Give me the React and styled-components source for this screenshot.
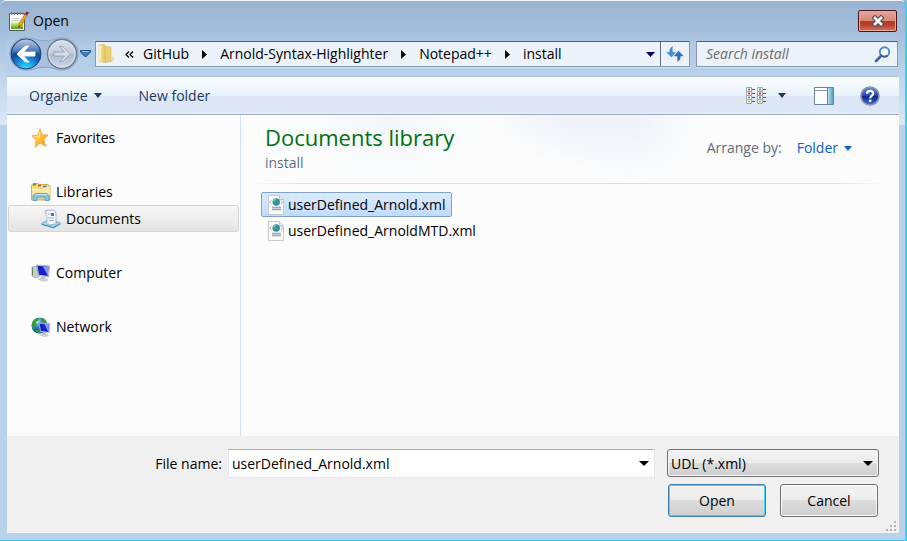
import React from "react";
import styled, { createGlobalStyle, css } from "styled-components";

const GlobalStyle = createGlobalStyle`
  *, *::before, *::after { box-sizing: border-box; }
  body {
    margin: 0;
    background: #9ab5d2;
    color: #000;
    font: 14px/20px "Open Sans", "Noto Sans", sans-serif;
  }
  button, input, select { font: inherit; color: inherit; margin: 0; }
  svg { display: block; flex: none; }
`;

const Window = styled.div`
  display: flex;
  flex-direction: column;
  min-height: 100vh;
  padding: 0 6px 7px 7px;
  border-top: 1px solid #f2f6fa;
  border-right: 2px solid #2fd3ea;
  border-bottom: 1px solid #2bd0e6;
  border-radius: 6px 6px 0 0;
  background:
    linear-gradient(#98b4d1 0, #a4bedb 30px, #b2cbe6 48px, #b9d1ea 76px, transparent 76px) center top / calc(100% - 14px) 100% no-repeat,
    linear-gradient(#98b4d1 0, #a4bedb 30px, #b9d1ea 66px, #dce8f5 124px, #b9d1ea 124px);
`;

const TitleBar = styled.header`
  display: flex;
  align-items: center;
  height: 39px;
  padding: 1px 2px 0;
  gap: 4px;
`;

const Title = styled.h1`
  flex: 1;
  margin: 0;
  font-size: 14px;
  font-weight: 400;
  line-height: 20px;
`;

const CloseButton = styled.button`
  display: flex;
  align-items: center;
  justify-content: center;
  width: 39px;
  height: 22px;
  padding: 0;
  border: 1px solid #4b1420;
  border-radius: 2px;
  box-shadow: inset 0 0 0 1px #e9a79a;
  background: linear-gradient(#e5a598 0, #d98678 10px, #b5391f 10px, #b8412a 14px, #cf7563 100%);
`;

const NavBar = styled.nav`
  display: flex;
  align-items: center;
  height: 36px;
  padding: 0 1px 8px 2px;
`;

const HistoryButtons = styled.div`
  position: relative;
  display: flex;
  align-items: center;
  width: 86px;
  height: 34px;
  flex: none;
`;

const HistoryButton = styled.button`
  display: flex;
  align-items: center;
  justify-content: center;
  width: ${(p) => p.$width}px;
  height: 34px;
  padding: 0;
  border: 0;
  background: none;
  z-index: 1;
`;

const Groove = styled.svg`
  position: absolute;
  inset: 0;
`;

const fieldFrame = css`
  border: 1px solid #8c99a8;
  border-top-color: #54616f;
  box-shadow: 0 1px 0 #d5e3f1;
  background: #ebf2fa;
`;

const AddressBar = styled.div`
  ${fieldFrame}
  display: flex;
  align-items: center;
  flex: 1;
  min-width: 0;
  height: 26px;
  padding-left: 1px;
`;

const Crumb = styled.button`
  padding: 0;
  border: 0;
  background: none;
  white-space: nowrap;
`;

const CrumbArrow = styled.span`
  display: flex;
  justify-content: center;
  width: 31px;
  flex: none;
`;

const Chevrons = styled.span`
  display: flex;
  justify-content: center;
  width: 27px;
  flex: none;
`;

const Spacer = styled.span`
  flex: 1;
`;

const AddressButton = styled.button`
  display: flex;
  align-items: center;
  justify-content: center;
  width: ${(p) => (p.$divided ? 29 : 20)}px;
  height: 24px;
  padding: 0;
  border: 0;
  border-left: ${(p) => (p.$divided ? "1px solid #5f6c7a" : "0")};
  background: none;
  flex: none;
`;

const SearchBox = styled.label`
  ${fieldFrame}
  display: flex;
  align-items: center;
  width: 202px;
  height: 26px;
  margin-left: 6px;
  padding: 0 6px 0 9px;
  flex: none;
`;

const SearchInput = styled.input`
  flex: 1;
  min-width: 0;
  padding: 0;
  border: 0;
  outline: 0;
  background: none;
  &::placeholder { color: #6d6d6d; font-style: italic; opacity: 1; }
`;

const Toolbar = styled.div`
  display: flex;
  align-items: center;
  height: 39px;
  padding: 0 19px 0 22px;
  border-top: 1px solid #a9bfd9;
  border-bottom: 1px solid #a0afc3;
  background: linear-gradient(#fbfdff 0, #e9f1fa 19px, #dce6f4 19px, #dce6f4 33px, #e4ecf7 37px);
`;

const ToolButton = styled.button`
  display: flex;
  align-items: center;
  gap: 6px;
  padding: 0;
  margin-left: ${(p) => p.$gap || 0}px;
  border: 0;
  background: none;
  color: #1e395b;
`;

const Body = styled.main`
  display: flex;
  flex: 1;
  background: #fcfcfc;
`;

const Sidebar = styled.aside`
  width: 234px;
  flex: none;
  padding: 9px 1px 0;
  border-right: 1px solid #d2e3f5;
`;

const Group = styled.div`
  margin-bottom: 27px;
`;

const Place = styled.a`
  display: flex;
  align-items: center;
  gap: 5px;
  height: 27px;
  padding-left: ${(p) => (p.$nested ? 32 : 22)}px;
  border: 1px solid ${(p) => (p.$selected ? "#d4d4d4" : "transparent")};
  border-radius: 3px;
  background: ${(p) => (p.$selected ? "linear-gradient(#f7f7f7, #e3e3e3)" : "none")};
  color: #000;
  text-decoration: none;
`;

const Content = styled.section`
  flex: 1;
  min-width: 0;
`;

const LibraryHeader = styled.div`
  display: flex;
  align-items: center;
  justify-content: space-between;
  height: 69px;
  padding: 0 47px 3px 24px;
  background:
    linear-gradient(to right, transparent, #d6e0ea 8%, #d6e0ea 92%, transparent) 10px bottom / calc(100% - 24px) 1px no-repeat,
    radial-gradient(ellipse 90px 50px at 50% 0, #eef2f9, transparent) no-repeat,
    radial-gradient(ellipse 80px 70px at 59% 10%, #f0f4fa, transparent) no-repeat,
    radial-gradient(ellipse 110px 60px at 22% 20%, #f4f7fb, transparent) no-repeat;
`;

const LibraryTitle = styled.h2`
  margin: 0;
  font-size: 22px;
  font-weight: 400;
  line-height: 28px;
  margin-top: -1px;
  color: #00700f;
`;

const LibraryPath = styled.p`
  margin: 0;
  padding-top: 2px;
  line-height: 20px;
  color: #5f6f80;
`;

const Arrange = styled.div`
  display: flex;
  gap: 15px;
  color: #5f6b78;
`;

const ArrangeButton = styled.button`
  display: flex;
  align-items: center;
  gap: 6px;
  padding: 0;
  border: 0;
  background: none;
  color: #0a62cc;
`;

const Files = styled.ul`
  margin: 0;
  padding: 8px 20px;
  list-style: none;
`;

const FileItem = styled.li`
  display: flex;
  margin-bottom: 1px;
`;

const File = styled.button`
  display: flex;
  align-items: center;
  gap: 4px;
  height: 25px;
  padding: 0 6px;
  border: 1px solid ${(p) => (p.$selected ? "#7da2ce" : "transparent")};
  border-radius: 2px;
  background: ${(p) => (p.$selected ? "linear-gradient(#dcebfc, #c1dbfc)" : "none")};
`;

const Footer = styled.footer`
  position: relative;
  display: grid;
  grid-template-columns: 215px 1fr 212px;
  column-gap: 6px;
  row-gap: 6px;
  padding: 13px 20px 16px 0;
  background: #f0f0f0;
`;

const FieldLabel = styled.label`
  align-self: center;
  text-align: right;
`;

const NameBox = styled.div`
  display: flex;
  height: 29px;
  margin-right: 6px;
  border: 1px solid #e2e6ef;
  border-top-color: #abadb3;
  background: #fff;
`;

const NameInput = styled.input`
  flex: 1;
  min-width: 0;
  padding: 0 3px;
  border: 0;
  outline: 0;
  background: none;
`;

const DropButton = styled.button`
  display: flex;
  align-items: center;
  justify-content: center;
  width: 20px;
  padding: 0;
  border: 0;
  background: none;
`;

const bevel = "linear-gradient(#f3f3f3 0, #ebebeb 50%, #dddddd 50%, #cecece 100%)";

const TypeBox = styled.div`
  position: relative;
  height: 28px;
  > svg { position: absolute; right: 6px; top: 12px; pointer-events: none; }
`;

const TypeSelect = styled.select`
  appearance: none;
  width: 100%;
  height: 28px;
  padding: 1px 20px 0 3px;
  border: 1px solid #707070;
  border-radius: 3px;
  box-shadow: inset 0 0 0 1px #f7f7f7;
  background: ${bevel};
`;

const Actions = styled.div`
  grid-column: 3;
  display: flex;
  gap: 14px;
  padding: 0 1px;
  height: 33px;
`;

const ActionButton = styled.button`
  flex: 1;
  padding: 0;
  border: 1px solid ${(p) => (p.$primary ? "#3c7fb1" : "#707070")};
  border-radius: 3px;
  box-shadow: inset 0 0 0 1px ${(p) => (p.$primary ? "#48d0f5" : "#fafafa")};
  background: ${bevel};
`;

const Grip = styled.svg`
  position: absolute;
  right: 2px;
  bottom: 1px;
`;

const Down = ({ color = "#000", size = 9 }) => (
  <svg width={size} height="5" viewBox="0 0 10 5" preserveAspectRatio="none" aria-hidden="true">
    <path d="M0 0h10L5 5z" fill={color} />
  </svg>
);

const Right = () => (
  <svg width="5" height="9" viewBox="0 0 5 9" aria-hidden="true">
    <path d="M0 0v9l5-4.5z" />
  </svg>
);

const NotepadIcon = () => (
  <svg width="20" height="20" viewBox="0 0 20 20" aria-hidden="true">
    <defs>
      <linearGradient id="pad" x2="0" y2="1">
        <stop offset="0" stopColor="#fff" /><stop offset=".4" stopColor="#eef5dc" />
        <stop offset=".65" stopColor="#a7dc4c" /><stop offset="1" stopColor="#4e9a1c" />
      </linearGradient>
    </defs>
    <path d="M.5 2.5h15v17H.5z" fill="#fff" stroke="#555c60" />
    <path d="M2 6h12v12H2z" fill="url(#pad)" />
    <path d="M2.5 1v3M5.5 1v3M8.5 1v3M11.5 1v3M14 1v3" stroke="#777d80" />
    <path d="M3 7.5h7M3 9.5h6" stroke="#ccd0cc" />
    <path d="M16 3l2 1.5-5.5 10-3 2 .5-4z" fill="#f2a51c" stroke="#a26514" strokeWidth=".6" />
    <path d="M16 3l1.5-2.5 2.5 1-2 3z" fill="#9c1720" />
    <path d="M9.5 16.5l.3-2 1.4 1z" fill="#333" />
  </svg>
);

const CloseIcon = () => (
  <svg width="14" height="12" viewBox="0 0 14 12" aria-hidden="true">
    <path d="M4 3l6 6M10 3l-6 6" stroke="#444957" strokeWidth="4.8" strokeLinecap="square" />
    <path d="M4 3l6 6M10 3l-6 6" stroke="#f8f4f4" strokeWidth="2.8" strokeLinecap="square" />
  </svg>
);

const BackIcon = () => (
  <svg width="32" height="32" viewBox="0 0 32 32" aria-hidden="true">
    <defs>
      <radialGradient id="back" cx=".5" cy="1" r=".9">
        <stop offset="0" stopColor="#35e5ff" /><stop offset=".35" stopColor="#1b93dc" />
        <stop offset=".65" stopColor="#1448a0" /><stop offset="1" stopColor="#4d7bb8" />
      </radialGradient>
      <linearGradient id="gloss" x2="0" y2="1">
        <stop offset="0" stopColor="#d5e2f3" /><stop offset="1" stopColor="#4a73b6" />
      </linearGradient>
    </defs>
    <circle cx="16" cy="16" r="15" fill="url(#back)" stroke="#1d3f75" />
    <path d="M2.5 15a13.5 13.5 0 0 1 27 0c-7-2.5-19-2.5-27 0z" fill="url(#gloss)" opacity=".75" />
    <path d="M15.5 8l-8.5 8 8.5 8h3.5l-5.5-6H25v-4H13.5L19 8z" fill="#fff" stroke="#f4f8fc" strokeLinejoin="round" />
  </svg>
);

const ForwardIcon = () => (
  <svg width="32" height="32" viewBox="0 0 32 32" aria-hidden="true">
    <defs>
      <linearGradient id="fwd" x2="0" y2="1">
        <stop offset="0" stopColor="#d8e0e9" /><stop offset=".48" stopColor="#c3ced9" />
        <stop offset=".5" stopColor="#adbccd" /><stop offset="1" stopColor="#ced9e6" />
      </linearGradient>
    </defs>
    <circle cx="16" cy="16" r="14.5" fill="url(#fwd)" stroke="#6b7c91" strokeWidth="1.4" />
    <circle cx="16" cy="16" r="13.3" fill="none" stroke="#e5ecf3" strokeOpacity=".7" />
    <path d="M16.5 8.5l8 7.5-8 7.5H13.500l5-5.500H8v-4h10.500l-5-5.500z" fill="#d4dde7" stroke="#98a8ba" strokeLinejoin="round" />
  </svg>
);

const HistoryDown = () => (
  <svg width="11" height="8" viewBox="0 0 11 8" aria-hidden="true">
    <path d="M.5.5h10V2l-5 5-5-5z" fill="#3b7fc0" stroke="#1d4a82" />
    <path d="M2 1.5h7" stroke="#8fc5ee" />
  </svg>
);

const FolderIcon = () => (
  <svg width="19" height="22" viewBox="0 0 19 22" aria-hidden="true">
    <defs>
      <linearGradient id="fold"><stop offset="0" stopColor="#f8e9a4" /><stop offset="1" stopColor="#e0bd53" /></linearGradient>
    </defs>
    <path d="M10 17l8-3-3 5-8 1z" fill="#a9b6c4" opacity=".6" />
    <path d="M6 3l8 1v14l-8 1z" fill="#ead078" stroke="#d3b050" strokeWidth=".5" />
    <path d="M14 12l2 1v4l-2 1z" fill="#f3dc94" />
    <path d="M2 2l5-1 2 4v15l-7-2z" fill="url(#fold)" stroke="#dcc06a" strokeWidth=".5" />
    <path d="M3 3v14" stroke="#fffbe0" />
  </svg>
);

const ChevronsIcon = () => (
  <svg width="9" height="7" viewBox="0 0 9 7" fill="none" stroke="#000" strokeWidth="1.3" aria-hidden="true">
    <path d="M4 .5l-3 3 3 3M8 .5l-3 3 3 3" />
  </svg>
);

const RefreshIcon = () => (
  <svg width="18" height="16" viewBox="0 0 18 16" aria-hidden="true">
    <path d="M6.5 .5C4 2 3.5 4 3.8 6.5H.8L5.5 11l4-4.5H6.8C6.3 4 6 2 6.5 .5z" fill="#3b91d8" stroke="#2b6eb5" strokeWidth=".4" />
    <path d="M11.5 15.5c2.5-1.5 3-3.5 2.7-5.5h3L12.5 5l-4.2 5h2.9c.4 2 .8 4 .3 5.5z" fill="#356dc0" stroke="#2452a0" strokeWidth=".4" />
  </svg>
);

const SearchIcon = () => (
  <svg width="17" height="17" viewBox="0 0 17 17" aria-hidden="true">
    <path d="M7 10L2 15" stroke="#3d5eaa" strokeWidth="2.6" strokeLinecap="round" />
    <circle cx="10.5" cy="6" r="4.7" fill="#f8fcff" stroke="#498bcc" strokeWidth="1.9" />
    <path d="M6.5 8.5A4.7 4.7 0 0 0 13.5 9.5" fill="none" stroke="#385ca7" strokeWidth="1.7" />
  </svg>
);

const ViewIcon = () => (
  <svg width="20" height="17" viewBox="0 0 20 17" aria-hidden="true">
    {[0, 11].map((x) => (
      <g key={x} transform={`translate(${x} 0)`}>
        <path d="M.5 .5h5v16h-5zM.5 4.5h5M.5 8.5h5M.5 12.5h5" fill="#fff" stroke="#a0a7b0" />
        <path d="M6 2.5h3M6 6.5h3M6 10.5h3M6 14.5h3" stroke="#45566e" />
        <path d="M2 2.5h2" stroke="#5e9b68" strokeWidth="2" />
        <path d="M2 6.5h2" stroke="#e0301c" strokeWidth="2" />
        <path d="M2 10.5h2" stroke="#3e8ddd" strokeWidth="2" />
        <path d="M2 14.5h2" stroke="#a4c928" strokeWidth="2" />
      </g>
    ))}
  </svg>
);

const PaneIcon = () => (
  <svg width="20" height="18" viewBox="0 0 20 18" aria-hidden="true">
    <defs>
      <linearGradient id="pane"><stop offset="0" stopColor="#b5deee" /><stop offset="1" stopColor="#52a4c6" /></linearGradient>
    </defs>
    <path d="M.5 .5h19v17H.5z" fill="#fafcfe" stroke="#6c8097" />
    <path d="M1 3.5h13" stroke="#8494aa" />
    <path d="M14 1h5v16h-5z" fill="url(#pane)" />
    <path d="M13.5 1v16" stroke="#568ba7" />
  </svg>
);

const HelpIcon = () => (
  <svg width="20" height="20" viewBox="0 0 20 20" aria-hidden="true">
    <defs>
      <linearGradient id="help" x2="0" y2="1">
        <stop offset="0" stopColor="#6a8de0" /><stop offset=".48" stopColor="#2446ae" />
        <stop offset=".5" stopColor="#0a2590" /><stop offset="1" stopColor="#3b6dd8" />
      </linearGradient>
    </defs>
    <circle cx="10" cy="10" r="9" fill="url(#help)" stroke="#8b94a4" strokeWidth="1.6" />
    <path d="M7 7.8C7 4 13.5 4 13.2 7.6c-.2 2-3 2-3 4.6" fill="none" stroke="#fff" strokeWidth="2.2" />
    <circle cx="10.2" cy="14.8" r="1.4" fill="#fff" />
  </svg>
);

const StarIcon = () => (
  <svg width="20" height="20" viewBox="0 0 20 20" aria-hidden="true">
    <defs>
      <linearGradient id="star" x2="1" y2="1">
        <stop offset="0" stopColor="#fff06c" /><stop offset=".5" stopColor="#fdc13c" /><stop offset="1" stopColor="#ee8a1c" />
      </linearGradient>
    </defs>
    <path d="M12 15l5 2-2 2z" fill="#9aa" opacity=".4" />
    <path d="M9 .7l2 6.1 6 .3-4.3 4.5 1.5 6.5-5-3-5 4 1-6.6L1 7.8l6-.8z" fill="url(#star)" stroke="#e9a133" strokeWidth=".8" />
    <path d="M9 2.5V10L3 8.5l4.5-.6z" fill="#fff4a0" opacity=".7" />
  </svg>
);

const LibrariesIcon = () => (
  <svg width="20" height="20" viewBox="0 0 20 20" aria-hidden="true">
    <path d="M.5 3.5l1.5-2h5l1 1h9l2 1.5v14H.5z" fill="#f0d77c" stroke="#cfae51" />
    <path d="M2 2.5h3" stroke="#2fa84a" strokeWidth="2" />
    <path d="M7 3.5h3" stroke="#d9503a" strokeWidth="1.6" />
    <path d="M12 4.5h4" stroke="#3b86d6" strokeWidth="1.6" />
    <path d="M1 6.5h13l1-2h4v9H1z" fill="#f9e8a4" />
    <path d="M2 18.5v-5l2-2h12l2 2v5h-4v-3.5H6v3.5z" fill="#83c6e6" stroke="#5aa7ce" />
    <path d="M4 12.5h12" stroke="#c8edfa" />
  </svg>
);

const DocumentsIcon = () => (
  <svg width="20" height="20" viewBox="0 0 20 20" aria-hidden="true">
    <path d="M0 15l5-3h9l6 2.5-7 4.5z" fill="#9fd4ed" stroke="#5aa5cf" strokeWidth=".8" />
    <path d="M1 15.5l11 3 7-3.5" fill="none" stroke="#388fc6" />
    <path d="M4 1.5L13 1l2 3v11l-8 1z" fill="#f4f7fb" stroke="#98a7b9" strokeWidth=".8" />
    <path d="M7 5h3M7 9h6M8 11.5h5" stroke="#a3b3ca" />
    <path d="M10 4h3v3h-3z" fill="#4e79b9" />
    <path d="M5 2l2 13" stroke="#d1d9e2" strokeWidth="1.5" />
  </svg>
);

const Monitor = () => (
  <>
    <path d="M5.5 2l13 1-1 11-10-1.5z" fill="#e6e8eb" stroke="#9ca2aa" strokeWidth=".8" />
    <path d="M6.3 2.8l11.3.9-.9 9.2-8.7-1.2z" fill="#1522c0" />
    <path d="M12 3.4l5.5 .4-.8 9z" fill="#8796f0" />
    <path d="M10 14l4 .5v2H9z" fill="#aeb4bb" />
    <path d="M7 16l8-.5 2 1.5-5 1.5z" fill="#d6d9dc" stroke="#adb2b7" strokeWidth=".5" />
  </>
);

const ComputerIcon = () => (
  <svg width="20" height="20" viewBox="0 0 20 20" aria-hidden="true">
    <path d="M1 4l5-1 2 11-4 1-3-2z" fill="#c6c9cc" stroke="#8e9499" strokeWidth=".6" />
    <path d="M1.5 4.5v8" stroke="#558d61" />
    <Monitor />
  </svg>
);

const NetworkIcon = () => (
  <svg width="20" height="20" viewBox="0 0 20 20" aria-hidden="true">
    <defs>
      <radialGradient id="globe" cx=".35" cy=".25">
        <stop offset="0" stopColor="#d5f6ff" /><stop offset=".45" stopColor="#45a9e0" /><stop offset="1" stopColor="#145aa0" />
      </radialGradient>
    </defs>
    <circle cx="8.5" cy="8.5" r="8" fill="url(#globe)" />
    <path d="M3 3c3-3 5-2 5 0L5 5l1 3-3 1 1 4C0 11 0 6 3 3zM10 1c3 0 5 2 6 5l-5-1zM5 12l4 2v2l-4-1z" fill="#3a9e38" />
    <g transform="translate(3 4) scale(.86)"><Monitor /></g>
  </svg>
);

const XmlIcon = () => (
  <svg width="16" height="20" viewBox="0 0 16 20" aria-hidden="true">
    <path d="M.5 .5h11l4 4v15H.5z" fill="#fafafa" stroke="#c6c9ce" />
    <path d="M11.5 .5v4h4" fill="#e7e9ed" stroke="#c5c7cc" />
    <path d="M3.5 5.5L1.8 7.2l1.7 1.6M13 5.5l1.7 1.7L13 8.8" fill="none" stroke="#a1a8b6" />
    <circle cx="8.2" cy="7" r="3.7" fill="#2b84c4" />
    <path d="M5.5 5c2-2 4-1 4-.5L8 6l.5 2L6 9zM10 7h2l-1 2.5z" fill="#3fb052" />
    <path d="M5.5 5.5l2-1.5" stroke="#b9ecf5" />
    <path d="M4 12.5h9M4 14.5h9" stroke="#a2a3b4" strokeWidth="1.5" />
  </svg>
);

const crumbs = ["GitHub", "Arnold-Syntax-Highlighter", "Notepad++", "install"];

const places = [
  [{ name: "Favorites", Icon: StarIcon }],
  [{ name: "Libraries", Icon: LibrariesIcon }, { name: "Documents", Icon: DocumentsIcon, nested: true }],
  [{ name: "Computer", Icon: ComputerIcon }],
  [{ name: "Network", Icon: NetworkIcon }],
];

const files = ["userDefined_Arnold.xml", "userDefined_ArnoldMTD.xml"];

export default function App() {
  return (
    <>
      <GlobalStyle />
      <Window>
        <TitleBar>
          <NotepadIcon />
          <Title>Open</Title>
          <CloseButton aria-label="Close"><CloseIcon /></CloseButton>
        </TitleBar>
        <NavBar>
          <HistoryButtons>
            <Groove width="72" height="34" viewBox="0 0 72 34" aria-hidden="true">
              <path d="M17 .8c8 0 10 3 19 3s11-3 17-3a16 16 0 0 1 0 32.4c-6 0-9-3-17-3s-11 3-19 3A16 16 0 0 1 17 .8z" fill="#9fb7d2" fillOpacity=".6" stroke="#8aa4c2" />
            </Groove>
            <HistoryButton $width={34} aria-label="Back"><BackIcon /></HistoryButton>
            <HistoryButton $width={37} aria-label="Forward"><ForwardIcon /></HistoryButton>
            <HistoryButton $width={11} aria-label="Recent pages"><HistoryDown /></HistoryButton>
          </HistoryButtons>
          <AddressBar>
            <FolderIcon />
            <Chevrons><ChevronsIcon /></Chevrons>
            {crumbs.map((name, i) => (
              <React.Fragment key={name}>
                {i > 0 && <CrumbArrow><Right /></CrumbArrow>}
                <Crumb>{name}</Crumb>
              </React.Fragment>
            ))}
            <Spacer />
            <AddressButton aria-label="Previous locations"><Down color="#000050" /></AddressButton>
            <AddressButton $divided aria-label="Refresh"><RefreshIcon /></AddressButton>
          </AddressBar>
          <SearchBox>
            <SearchInput type="search" placeholder="Search install" aria-label="Search install" />
            <SearchIcon />
          </SearchBox>
        </NavBar>
        <Toolbar>
          <ToolButton>Organize <Down color="#1e395b" size={8} /></ToolButton>
          <ToolButton $gap={37}>New folder</ToolButton>
          <Spacer />
          <ToolButton aria-label="Change view"><ViewIcon /></ToolButton>
          <ToolButton $gap={12} aria-label="More view options"><Down color="#1e395b" size={8} /></ToolButton>
          <ToolButton $gap={28} aria-label="Preview pane"><PaneIcon /></ToolButton>
          <ToolButton $gap={26} aria-label="Help"><HelpIcon /></ToolButton>
        </Toolbar>
        <Body>
          <Sidebar>
            {places.map((group) => (
              <Group key={group[0].name}>
                {group.map(({ name, Icon, nested }) => (
                  <Place key={name} href="#" $nested={nested} $selected={nested}>
                    <Icon />
                    {name}
                  </Place>
                ))}
              </Group>
            ))}
          </Sidebar>
          <Content>
            <LibraryHeader>
              <div>
                <LibraryTitle>Documents library</LibraryTitle>
                <LibraryPath>install</LibraryPath>
              </div>
              <Arrange>
                <span>Arrange by:</span>
                <ArrangeButton>Folder <Down color="#0a62cc" size={8} /></ArrangeButton>
              </Arrange>
            </LibraryHeader>
            <Files>
              {files.map((name, i) => (
                <FileItem key={name}>
                  <File $selected={i === 0}><XmlIcon />{name}</File>
                </FileItem>
              ))}
            </Files>
          </Content>
        </Body>
        <Footer>
          <FieldLabel htmlFor="file-name">File name:</FieldLabel>
          <NameBox>
            <NameInput id="file-name" defaultValue="userDefined_Arnold.xml" />
            <DropButton aria-label="Recent file names"><Down size={10} /></DropButton>
          </NameBox>
          <TypeBox>
            <TypeSelect aria-label="File type">
              <option>UDL (*.xml)</option>
            </TypeSelect>
            <Down size={10} />
          </TypeBox>
          <Actions>
            <ActionButton $primary>Open</ActionButton>
            <ActionButton>Cancel</ActionButton>
          </Actions>
          <Grip width="11" height="11" viewBox="0 0 11 11" fill="#b4b4b4" aria-hidden="true">
            <path d="M8 0h2v2H8zM8 4h2v2H8zM4 4h2v2H4zM8 8h2v2H8zM4 8h2v2H4zM0 8h2v2H0z" />
          </Grip>
        </Footer>
      </Window>
    </>
  );
}
